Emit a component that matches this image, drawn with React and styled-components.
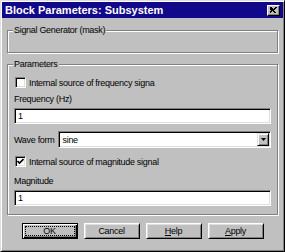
import React from "react";
import styled, { createGlobalStyle } from "styled-components";

const Global = createGlobalStyle`
  html, body { margin: 0; padding: 0; background: #c0c0c0; }
  * { box-sizing: border-box; }
`;

const Win = styled.div`
  width: 285px;
  height: 252px;
  background: #c0c0c0;
  border: 1px solid;
  border-color: #dfdfdf #000 #000 #dfdfdf;
  box-shadow: inset 1px 1px #fff, inset -1px -1px #808080;
  padding: 1px;
  display: flex;
  flex-direction: column;
  font-family: "Liberation Sans", Arial, sans-serif;
  color: #000;
`;

const TitleBar = styled.div`
  height: 16px;
  background: #12088a;
  display: flex;
  align-items: center;
  justify-content: space-between;
  padding: 0 3px 0 3px;
`;

const Title = styled.span`
  color: #fff;
  font-weight: bold;
  font-size: 11px;
  line-height: 16px;
  white-space: nowrap;
`;

const CloseBtn = styled.div`
  width: 13px;
  height: 11px;
  background: #c0c0c0;
  border: 1px solid;
  border-color: #fff #000 #000 #fff;
  box-shadow: inset -1px -1px #808080;
  display: flex;
  align-items: center;
  justify-content: center;
`;

const Body = styled.div`
  flex: 1;
  display: flex;
  flex-direction: column;
  padding: 12px 5px 0 5px;
`;

const Group = styled.div`
  position: relative;
  height: ${(p) => p.$h}px;
  margin-top: ${(p) => p.$mt || 0}px;
  border: 1px solid #808080;
  box-shadow: inset 1px 1px #fff, 1px 1px #fff;
  padding: 12px 6px 0 6px;
  display: flex;
  flex-direction: column;
`;

const Legend = styled.span`
  position: absolute;
  top: -7px;
  left: 5px;
  padding: 0 1px;
  background: #c0c0c0;
  font-size: 9px;
  letter-spacing: -0.3px;
  line-height: 12px;
  white-space: nowrap;
`;

const Text = styled.span`
  font-size: 9px;
  letter-spacing: -0.3px;
  line-height: 12px;
  white-space: nowrap;
`;

const Label = styled(Text)`
  display: block;
  margin-top: ${(p) => p.$mt || 0}px;
`;

const CheckRow = styled.div`
  display: flex;
  align-items: center;
  gap: 3px;
  height: 11px;
  margin-top: ${(p) => p.$mt || 0}px;
  padding-left: 1px;
`;

const Box = styled.div`
  width: 11px;
  height: 11px;
  flex: none;
  background: #fff;
  border: 1px solid;
  border-color: #808080 #fff #fff #808080;
  box-shadow: inset 1px 1px #000, inset -1px -1px #dfdfdf;
  display: flex;
  align-items: center;
  justify-content: center;
`;

const Field = styled.div`
  height: ${(p) => p.$h || 16}px;
  margin-top: ${(p) => p.$mt || 0}px;
  background: #fff;
  border: 1px solid;
  border-color: #808080 #fff #fff #808080;
  box-shadow: inset 1px 1px #000, inset -1px -1px #dfdfdf;
  display: flex;
  align-items: center;
  padding: 0 2px 0 3px;
  flex: ${(p) => (p.$grow ? 1 : "none")};
`;

const FieldText = styled(Text)`
  flex: 1;
`;

const WaveRow = styled.div`
  display: flex;
  align-items: center;
  margin-top: ${(p) => p.$mt || 0}px;
  gap: 4px;
`;

const DropBtn = styled.div`
  width: 12px;
  height: 13px;
  background: #c0c0c0;
  border: 1px solid;
  border-color: #dfdfdf #000 #000 #dfdfdf;
  box-shadow: inset 1px 1px #fff, inset -1px -1px #808080;
  display: flex;
  align-items: center;
  justify-content: center;
  margin-right: -1px;
`;

const Buttons = styled.div`
  display: flex;
  justify-content: center;
  gap: 6px;
  margin-top: 8px;
`;

const Button = styled.div`
  width: 56px;
  height: 16px;
  background: #c0c0c0;
  border: 1px solid;
  border-color: ${(p) => (p.$default ? "#000" : "#fff #000 #000 #fff")};
  box-shadow: ${(p) =>
    p.$default
      ? "inset 1px 1px #fff, inset -1px -1px #000, inset -2px -2px #808080"
      : "inset 1px 1px #dfdfdf, inset -1px -1px #808080"};
  display: flex;
  align-items: center;
  justify-content: center;
  padding: 2px;
`;

const Focus = styled.div`
  flex: 1;
  align-self: stretch;
  border: 1px dotted #000;
  display: flex;
  align-items: center;
  justify-content: center;
`;

const U = styled.span`
  text-decoration: underline;
`;

export default function App() {
  return (
    <>
      <Global />
      <Win>
        <TitleBar>
          <Title>Block Parameters: Subsystem</Title>
          <CloseBtn>
            <svg width="7" height="6" viewBox="0 0 7 6">
              <path d="M0 0h2v1h1v1h1v-1h1v-1h2v1h-1v1h-1v1h-1v1h1v1h1v1h-2v-1h-1v-1h-1v1h-1v1h-2v-1h1v-1h1v-1h-1v-1h-1z" fill="#000" />
            </svg>
          </CloseBtn>
        </TitleBar>
        <Body>
          <Group $h={23}>
            <Legend>Signal Generator (mask)</Legend>
          </Group>
          <Group $h={151} $mt={11}>
            <Legend>Parameters</Legend>
            <CheckRow>
              <Box />
              <Text>Internal source of frequency signa</Text>
            </CheckRow>
            <Label $mt={5}>Frequency (Hz)</Label>
            <Field $mt={3}>
              <FieldText>1</FieldText>
            </Field>
            <WaveRow $mt={7}>
              <Text>Wave form</Text>
              <Field $h={17} $grow>
                <FieldText>sine</FieldText>
                <DropBtn>
                  <svg width="5" height="3" viewBox="0 0 5 3">
                    <path d="M0 0h5L2.5 3z" fill="#000" />
                  </svg>
                </DropBtn>
              </Field>
            </WaveRow>
            <CheckRow $mt={8}>
              <Box>
                <svg width="7" height="7" viewBox="0 0 7 7">
                  <path d="M0.5 3 L2.5 5 L6.5 1" stroke="#000" strokeWidth="1.6" fill="none" />
                </svg>
              </Box>
              <Text>Internal source of magnitude signal</Text>
            </CheckRow>
            <Label $mt={8}>Magnitude</Label>
            <Field $mt={3}>
              <FieldText>1</FieldText>
            </Field>
          </Group>
          <Buttons>
            <Button $default>
              <Focus>
                <Text>OK</Text>
              </Focus>
            </Button>
            <Button>
              <Text>Cancel</Text>
            </Button>
            <Button>
              <Text>
                <U>H</U>elp
              </Text>
            </Button>
            <Button>
              <Text>
                <U>A</U>pply
              </Text>
            </Button>
          </Buttons>
        </Body>
      </Win>
    </>
  );
}
